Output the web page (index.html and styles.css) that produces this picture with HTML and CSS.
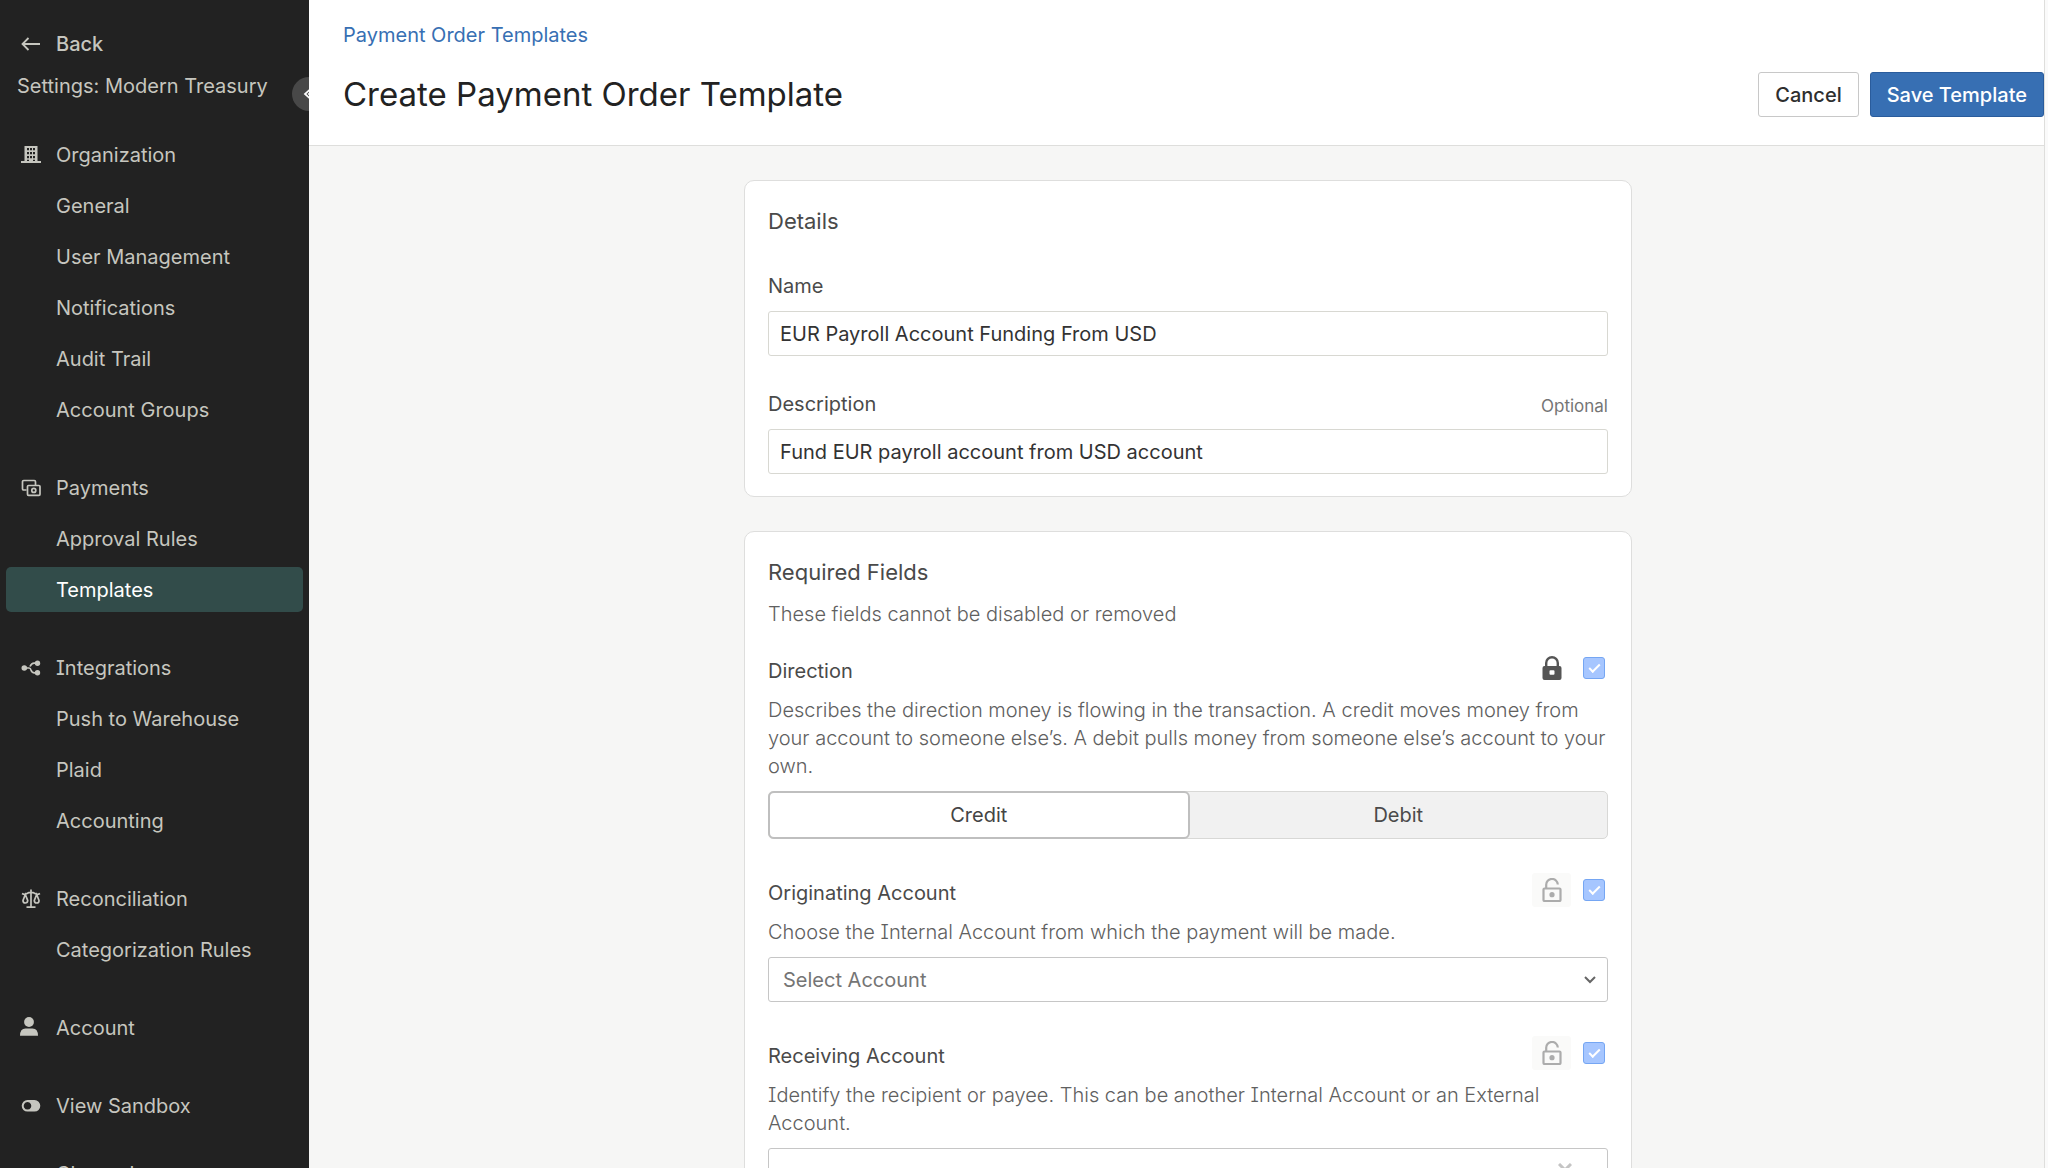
FILE: index.html
```html
<!DOCTYPE html>
<html lang="en">
<head>
    <meta charset="UTF-8">
    <meta name="viewport" content="width=device-width, initial-scale=1.0">
    <title>Create Payment Order Template</title>
    <link rel="stylesheet" href="styles.css">
</head>
<body>
    <div class="app">
        <nav class="sidebar">
            <a href="#" class="back">
                <svg class="icon" viewBox="0 0 20 20"><path d="M19 10H1.500M7.500 4L1.500 10l6 6" fill="none" stroke="currentColor" stroke-width="1.800"/></svg>
                Back
            </a>
            <div class="org-name">Settings: Modern Treasury</div>
            <button type="button" class="collapse" aria-label="Collapse sidebar">
                <svg viewBox="0 0 12 12"><path d="M7.500 1L2 6l5.500 5M9 3.500L6 6l3 2.500" fill="none" stroke="currentColor" stroke-width="1.800"/></svg>
            </button>

            <div class="nav-groups">
                <div class="nav-group">
                    <a href="#" class="nav-item">
                        <svg class="icon" viewBox="0 0 20 20" fill="currentColor"><path fill-rule="evenodd" d="M3.500 1h13v15H20v2H0v-2h3.500zM6 3v2.200h2V3zm3 0v2.200h2V3zm3 0v2.200h2V3zM6 7v2.200h2V7zm3 0v2.200h2V7zm3 0v2.200h2V7zM6 11v2.200h2V11zm3 0v2.200h2V11zm3 0v2.200h2V11zM6 14.800V16h2v-1.200zm6 0V16h2v-1.200z"/></svg>
                        Organization
                    </a>
                    <a href="#" class="nav-item">General</a>
                    <a href="#" class="nav-item">User Management</a>
                    <a href="#" class="nav-item">Notifications</a>
                    <a href="#" class="nav-item">Audit Trail</a>
                    <a href="#" class="nav-item">Account Groups</a>
                </div>

                <div class="nav-group">
                    <a href="#" class="nav-item">
                        <svg class="icon" viewBox="0 0 20 20" fill="none" stroke="currentColor" stroke-width="1.700"><path d="M5.500 12H2.700Q1.500 12 1.500 10.800V3.700Q1.500 2.500 2.700 2.500h10.600q1.200 0 1.200 1.200V7"/><rect x="6.500" y="7.500" width="12.500" height="9.800" rx="1"/><circle cx="12.800" cy="12.400" r="2"/></svg>
                        Payments
                    </a>
                    <a href="#" class="nav-item">Approval Rules</a>
                    <a href="#" class="nav-item active">Templates</a>
                </div>

                <div class="nav-group">
                    <a href="#" class="nav-item">
                        <svg class="icon" viewBox="0 0 20 20" fill="currentColor"><path d="M3 10h5q1.500 0 2 2 .8 2.800 3.500 2.800H16M9 8.500q1.500-3.300 4-3.300h3" fill="none" stroke="currentColor" stroke-width="1.700"/><circle cx="3.300" cy="10" r="2.800"/><circle cx="16.500" cy="5.200" r="2.700"/><circle cx="16.500" cy="14.800" r="2.700"/></svg>
                        Integrations
                    </a>
                    <a href="#" class="nav-item">Push to Warehouse</a>
                    <a href="#" class="nav-item">Plaid</a>
                    <a href="#" class="nav-item">Accounting</a>
                </div>

                <div class="nav-group">
                    <a href="#" class="nav-item">
                        <svg class="icon" viewBox="0 0 20 20" fill="none" stroke="currentColor" stroke-width="1.700"><path d="M10 .5V18M5.500 18.200h9M1 4.500q2.500 1.500 4.500.2 4.500-2.500 9 0 2 1.300 4.500-.2M4.300 5.500L2 11.500Q2 14 4.300 14t2.400-2.500zM15.700 5.500l-2.400 6q0 2.500 2.400 2.500t2.300-2.500z"/></svg>
                        Reconciliation
                    </a>
                    <a href="#" class="nav-item">Categorization Rules</a>
                </div>

                <div class="nav-group">
                    <a href="#" class="nav-item">
                        <svg class="icon" viewBox="0 0 20 20" fill="currentColor"><circle cx="8" cy="4" r="4.900"/><path d="M-1 17.800q0-7.300 5.500-7.300h7q5.500 0 5.500 7.300z"/></svg>
                        Account
                    </a>
                </div>

                <div class="nav-group">
                    <a href="#" class="nav-item">
                        <svg class="icon" viewBox="0 0 20 20" fill="currentColor"><path fill-rule="evenodd" d="M6.500 4h7a5.800 5.800 0 0 1 0 11.600h-7A5.800 5.800 0 0 1 6.500 4zm0 2a3.800 3.800 0 1 0 .01 0z"/></svg>
                        View Sandbox
                    </a>
                </div>

                <div class="nav-group nav-group-last">
                    <a href="#" class="nav-item">Changelog</a>
                </div>
            </div>
        </nav>

        <main class="page">
            <header class="page-header">
                <a href="#" class="breadcrumb">Payment Order Templates</a>
                <div class="title-row">
                    <h1>Create Payment Order Template</h1>
                    <div class="actions">
                        <button type="button" class="btn">Cancel</button>
                        <button type="submit" form="templateForm" class="btn btn-primary">Save Template</button>
                    </div>
                </div>
            </header>

            <form id="templateForm" class="content">
                <section class="card">
                    <h2>Details</h2>
                    <div class="field">
                        <label for="name">Name</label>
                        <input type="text" class="control" id="name" value="EUR Payroll Account Funding From USD">
                    </div>
                    <div class="field">
                        <div class="label-row">
                            <label for="description">Description</label>
                            <span class="optional">Optional</span>
                        </div>
                        <input type="text" class="control" id="description" value="Fund EUR payroll account from USD account">
                    </div>
                </section>

                <section class="card">
                    <h2>Required Fields</h2>
                    <p class="help card-help">These fields cannot be disabled or removed</p>

                    <div class="field field-first">
                        <div class="field-head">
                            <span class="label">Direction</span>
                            <div class="field-tools">
                                <button type="button" class="lock locked" aria-label="Unlock direction">
                                    <svg viewBox="0 0 20 24"><path d="M4.200 11V7a5.800 5.800 0 0 1 11.600 0v4" fill="none" stroke="currentColor" stroke-width="2.400"/><path fill="currentColor" fill-rule="evenodd" d="M2.500 10h15q2 0 2 2v10q0 2-2 2h-15q-2 0-2-2V12q0-2 2-2zM8.500 14.300q-1 0-1 1v2.500q0 1 1 1h3q1 0 1-1v-2.500q0-1-1-1z"/></svg>
                                </button>
                                <input type="checkbox" class="check" aria-label="Direction enabled" checked disabled>
                            </div>
                        </div>
                        <p class="help">Describes the direction money is flowing in the transaction. A credit moves money from your account to someone else’s. A debit pulls money from someone else’s account to your own.</p>
                        <div class="segmented">
                            <button type="button" class="segment selected">Credit</button>
                            <button type="button" class="segment">Debit</button>
                        </div>
                    </div>

                    <div class="field">
                        <div class="field-head">
                            <label for="originating">Originating Account</label>
                            <div class="field-tools">
                                <button type="button" class="lock" aria-label="Lock originating account">
                                    <svg viewBox="0 0 20 24"><path d="M4.200 10.500V7a5.800 5.800 0 0 1 11.600-.5" fill="none" stroke="currentColor" stroke-width="2.200"/><rect x="1.500" y="10.500" width="17" height="12.500" rx="1" fill="none" stroke="currentColor" stroke-width="2.200"/><circle cx="10" cy="16.700" r="2.600" fill="currentColor"/></svg>
                                </button>
                                <input type="checkbox" class="check" aria-label="Originating account enabled" checked disabled>
                            </div>
                        </div>
                        <p class="help">Choose the Internal Account from which the payment will be made.</p>
                        <div class="select-wrap">
                            <select class="control select" id="originating">
                                <option>Select Account</option>
                            </select>
                            <svg class="chevron" viewBox="0 0 12 8"><path d="M1 1l5 5 5-5" fill="none" stroke="currentColor" stroke-width="2"/></svg>
                        </div>
                    </div>

                    <div class="field">
                        <div class="field-head">
                            <label for="receiving">Receiving Account</label>
                            <div class="field-tools">
                                <button type="button" class="lock" aria-label="Lock receiving account">
                                    <svg viewBox="0 0 20 24"><path d="M4.200 10.500V7a5.800 5.800 0 0 1 11.600-.5" fill="none" stroke="currentColor" stroke-width="2.200"/><rect x="1.500" y="10.500" width="17" height="12.500" rx="1" fill="none" stroke="currentColor" stroke-width="2.200"/><circle cx="10" cy="16.700" r="2.600" fill="currentColor"/></svg>
                                </button>
                                <input type="checkbox" class="check" aria-label="Receiving account enabled" checked disabled>
                            </div>
                        </div>
                        <p class="help">Identify the recipient or payee. This can be another Internal Account or an External Account.</p>
                        <div class="select-wrap">
                            <input type="text" class="control select" id="receiving">
                            <button type="button" class="clear" aria-label="Clear">
                                <svg viewBox="0 0 14 14"><path d="M1 1l12 12M13 1L1 13" fill="none" stroke="currentColor" stroke-width="3"/></svg>
                            </button>
                        </div>
                    </div>
                </section>
            </form>
        </main>
    </div>
</body>
</html>
```
FILE: styles.css
```css
* {
    box-sizing: border-box;
}

body {
    margin: 0;
    font-family: "Inter", sans-serif;
    font-size: 20px;
    line-height: 28px;
    font-feature-settings: "cv08";
    color: #4a4a4a;
    background-color: #fafafa;
}

button, input, select {
    font: inherit;
    font-feature-settings: inherit;
    margin: 0;
}

h1, h2, p {
    margin: 0;
    font-weight: 400;
}

.app {
    display: flex;
    height: 100vh;
    overflow: hidden;
}

/* Sidebar */
.sidebar {
    position: relative;
    flex: none;
    width: 309px;
    padding: 30px 6px 0;
    overflow: hidden;
    background-color: #222222;
    color: #c6c6bf;
}

.sidebar a {
    color: inherit;
    text-decoration: none;
}

.back {
    display: flex;
    align-items: center;
    gap: 15px;
    padding-left: 15px;
    font-weight: 500;
}

.org-name {
    margin-top: 14px;
    padding-left: 11px;
}

.collapse {
    position: absolute;
    top: 77px;
    right: -17px;
    width: 34px;
    height: 34px;
    padding: 0 0 0 11px;
    border: none;
    border-radius: 50%;
    background-color: #484848;
    color: #fff;
    text-align: left;
}

.collapse svg {
    display: block;
    width: 12px;
    height: 12px;
}

.icon {
    flex: none;
    width: 20px;
    height: 20px;
    overflow: visible;
}

.nav-groups {
    margin-top: 32px;
}

.nav-group {
    display: flex;
    flex-direction: column;
    gap: 6px;
    margin-bottom: 33px;
}

.nav-group-last {
    margin-top: -10px;
}

.nav-item {
    display: flex;
    align-items: center;
    flex: none;
    gap: 15px;
    height: 45px;
    padding-left: 50px;
    border-radius: 5px;
}

.nav-item:has(.icon) {
    padding-left: 15px;
}

.sidebar .active {
    background-color: #324c4a;
    color: #fff;
}

/* Page header */
.page {
    flex: 1;
    margin-right: 3px;
    border-right: 1px solid #dededc;
    overflow: hidden;
    background-color: #f6f6f5;
}

.page-header {
    padding: 21px 0 28px 34px;
    border-bottom: 1px solid #dededc;
    background-color: #fff;
}

.breadcrumb {
    display: block;
    color: #376fb3;
    text-decoration: none;
}

.title-row {
    display: flex;
    align-items: center;
    justify-content: space-between;
    margin-top: 23px;
}

h1 {
    font-size: 33px;
    line-height: 45px;
    color: #222;
}

.actions {
    display: flex;
    gap: 11px;
}

.btn {
    height: 45px;
    padding: 0 16px;
    border: 1px solid #c8c8c8;
    border-radius: 3px;
    background-color: #fff;
    color: #2e2e2e;
    font-weight: 500;
}

.btn-primary {
    border-color: #2a5c9c;
    background-color: #376fb3;
    color: #fff;
}

/* Form cards */
.content {
    display: flex;
    flex-direction: column;
    align-items: center;
    gap: 34px;
    padding: 34px 11px 34px 34px;
}

.card {
    width: 100%;
    max-width: 888px;
    padding: 23px 23px 22px;
    border: 1px solid #dededd;
    border-radius: 10px;
    background-color: #fff;
}

h2 {
    font-size: 22px;
    line-height: 34px;
}

label, .label {
    display: block;
}

.card-help {
    margin-top: 11px;
}

.help {
    color: #606060;
    font-weight: 300;
}

.field {
    display: flex;
    flex-direction: column;
    gap: 11px;
    margin-top: 34px;
}

.field-first {
    margin-top: 23px;
}

.label-row {
    display: flex;
    align-items: flex-end;
    justify-content: space-between;
}

.optional {
    font-size: 17px;
    line-height: 24px;
    color: #757575;
}

.control {
    display: block;
    width: 100%;
    height: 45px;
    padding: 0 11px;
    border: 1px solid #d8d8d2;
    border-radius: 3px;
    background-color: #fff;
    color: #333;
}

.field-head {
    display: flex;
    align-items: flex-end;
    justify-content: space-between;
    height: 34px;
}

.field-tools {
    display: flex;
    align-items: center;
    gap: 12px;
    padding-right: 3px;
}

.lock {
    display: flex;
    align-items: center;
    justify-content: center;
    width: 39px;
    height: 34px;
    padding: 0;
    border: none;
    border-radius: 3px;
    background-color: #fafaf9;
    color: #acacac;
}

.lock svg {
    width: 20px;
    height: 24px;
}

.locked {
    background-color: transparent;
    color: #555;
}

.check {
    appearance: none;
    display: grid;
    place-items: center;
    width: 22px;
    height: 22px;
    border: 1px solid #75a6f3;
    border-radius: 3px;
    background-color: #a6c6ff;
}

.check::after {
    content: "";
    width: 11px;
    height: 6px;
    box-sizing: border-box;
    margin-bottom: 3px;
    border: solid #fff;
    border-width: 0 0 2px 2px;
    transform: rotate(-45deg);
}

.segmented {
    display: flex;
    height: 48px;
    border: 1px solid #d8d8d6;
    border-radius: 5px;
    background-color: #f1f1f1;
}

.segment {
    flex: 1;
    padding: 0;
    border: none;
    background: none;
    color: #4a4a4a;
}

.selected {
    margin: -1px 0 -1px -1px;
    border: 2px solid #bfbfbf;
    border-radius: 6px;
    background-color: #fff;
    color: #444;
}

.select-wrap {
    position: relative;
}

.select {
    appearance: none;
    padding-left: 14px;
    border-color: #c6c6c6;
    color: #757575;
}

.chevron {
    position: absolute;
    top: 19px;
    right: 12px;
    width: 12px;
    height: 8px;
    color: #666;
}

.clear {
    position: absolute;
    top: 15px;
    right: 36px;
    width: 14px;
    height: 14px;
    padding: 0;
    border: none;
    background: none;
    color: #c4c4c4;
}

.clear svg {
    display: block;
}
```
